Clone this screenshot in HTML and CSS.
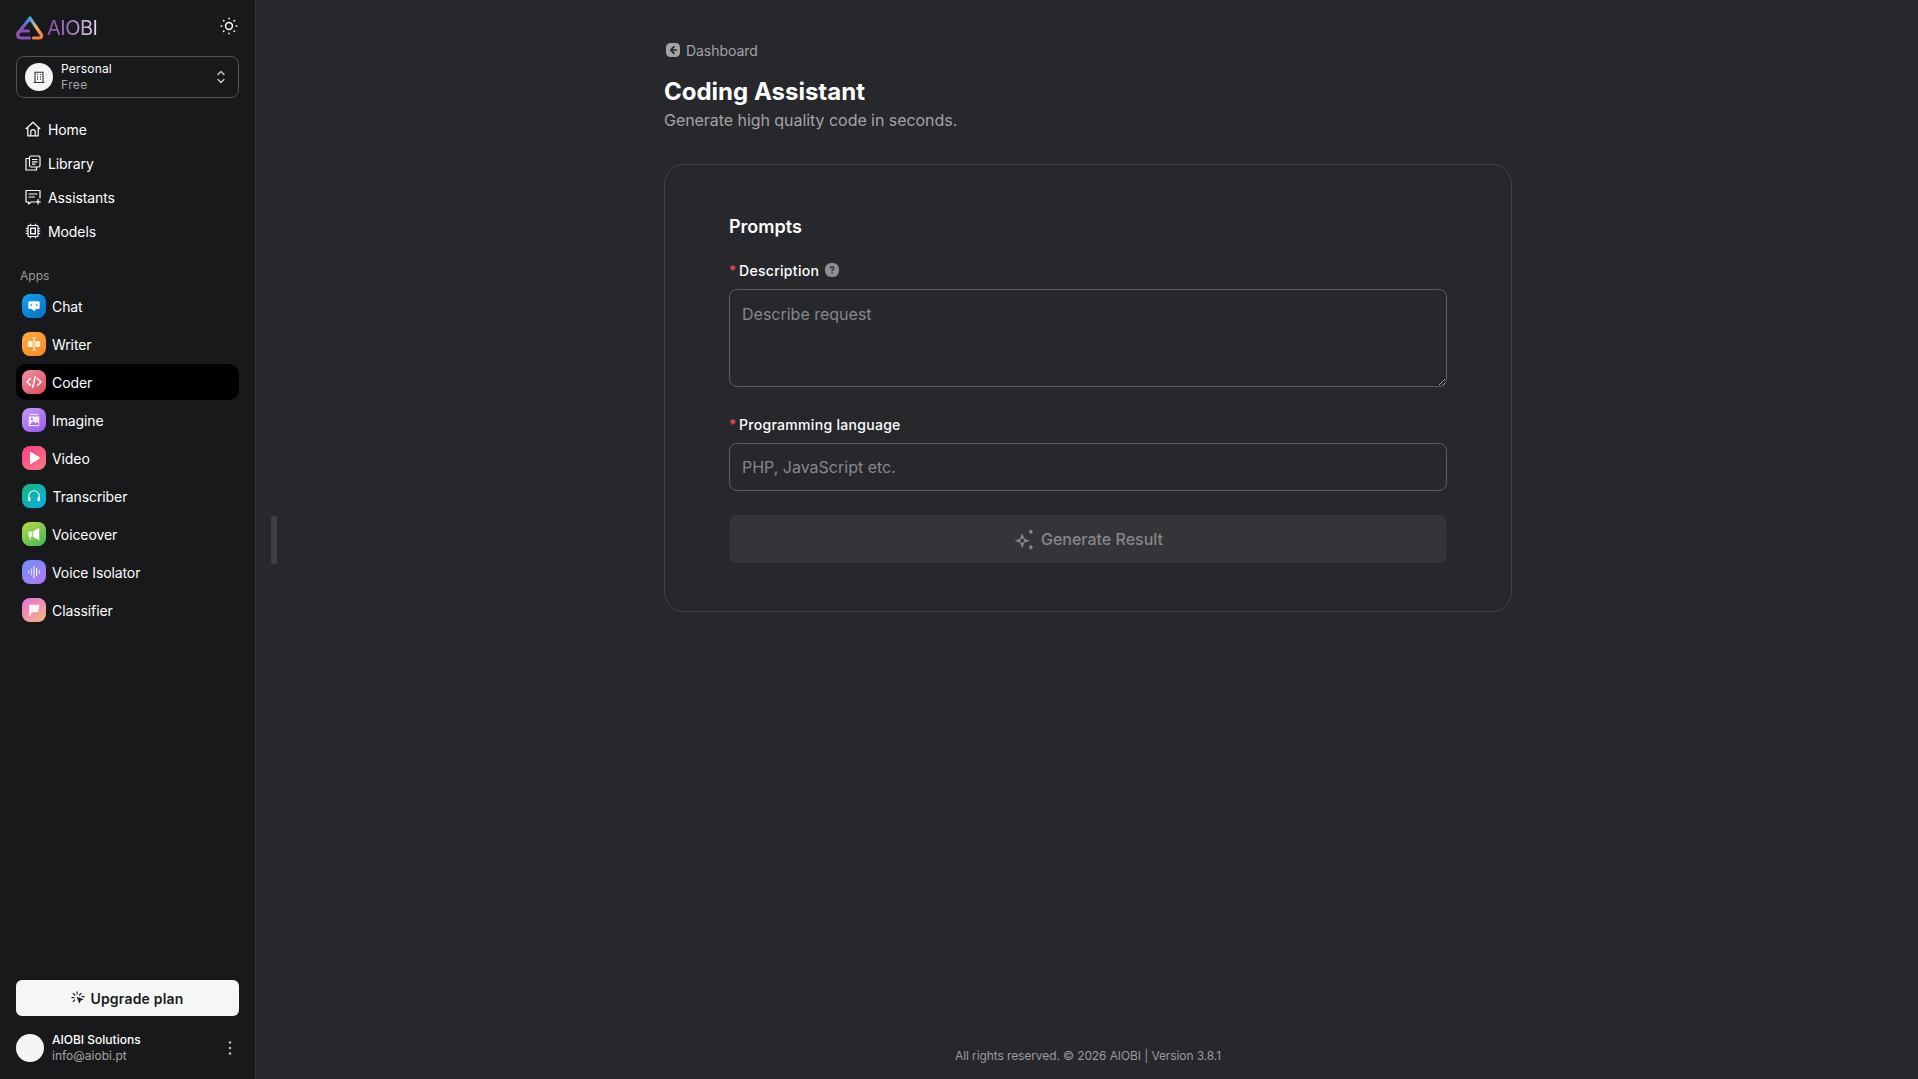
FILE: index.html
```html
<!DOCTYPE html>
<html lang="en">
<head>
<meta charset="utf-8">
<title>Coding Assistant</title>
<link rel="stylesheet" href="styles.css">
</head>
<body>
<svg class="defs" width="0" height="0" aria-hidden="true">
  <defs>
    <linearGradient id="logoA" gradientUnits="userSpaceOnUse" x1="4" y1="14" x2="14" y2="2">
      <stop offset="0" stop-color="#9a4fb8"/><stop offset=".55" stop-color="#5b6fd0"/><stop offset="1" stop-color="#38a8e8"/>
    </linearGradient>
    <linearGradient id="logoB" gradientUnits="userSpaceOnUse" x1="14" y1="2" x2="24" y2="22">
      <stop offset="0" stop-color="#38a8e8"/><stop offset=".5" stop-color="#e8b878"/><stop offset="1" stop-color="#f27a30"/>
    </linearGradient>
  </defs>
</svg>
<aside class="sidebar">
  <div class="brand-row">
    <div class="brand">
      <svg class="logo" viewBox="0 0 28 24" fill="none" stroke-width="3.2" stroke-linecap="round" stroke-linejoin="round">
        <path d="M14 2.2 L4.5 14" stroke="url(#logoA)"/>
        <path d="M14 2.2 L25.5 19 Q26.2 22 23 22 H17.5" stroke="url(#logoB)"/>
        <path d="M12.5 15 H6 Q1.7 15 1.7 18.5 Q1.7 22 5 22 H13.5" stroke="#8f4fb8"/>
      </svg>
      <span class="brand-name">AIOBI</span>
    </div>
    <svg class="sun" viewBox="0 0 18 18" fill="none" stroke="#fff" stroke-width="1.5" stroke-linecap="round">
      <circle cx="9" cy="9" r="3.4"/>
      <path d="M9 1.2v.6M9 16.2v.6M1.2 9h.6M16.2 9h.6M3.5 3.5l.4.4M14.1 14.1l.4.4M3.5 14.5l.4-.4M14.1 3.9l.4-.4"/>
    </svg>
  </div>

  <div class="account">
    <span class="account-avatar">
      <svg viewBox="0 0 14 14" fill="none" stroke="#333" stroke-width="1.1"><path d="M3 12.5V2.2h8v10.3M1.5 12.5h11"/><path d="M5 4.5h1M8 4.5h1M5 6.8h1M8 6.8h1M5 9.1h1M8 9.1h1" stroke-width="1.2"/></svg>
    </span>
    <span class="account-text">
      <span class="account-name">Personal</span>
      <span class="account-plan">Free</span>
    </span>
    <svg class="chevrons" viewBox="0 0 10 16" fill="none" stroke="#c8c8c8" stroke-width="1.4" stroke-linecap="round" stroke-linejoin="round"><path d="M2 5.5L5 2.5L8 5.5M2 10.5L5 13.5L8 10.5"/></svg>
  </div>

  <nav class="nav-main">
    <a class="nav-link">
      <svg viewBox="0 0 16 16" fill="none" stroke="#fff" stroke-width="1.2" stroke-linejoin="round"><path d="M.8 8L8 1.2L15.2 8M2.8 6.3V14.8H13.2V6.3"/><path d="M5.8 14.8V9.8Q8 7.6 10.2 9.8V14.8"/></svg>
      <span>Home</span>
    </a>
    <a class="nav-link">
      <svg viewBox="0 0 16 16" fill="none" stroke="#fff" stroke-width="1.2" stroke-linejoin="round"><rect x="4.5" y="1" width="10.5" height="11" rx="1.5"/><path d="M4.5 3.5H1V15H11.5V12M7 4.5H12.5M7 6.8H12.5M7 9.1H10.5"/></svg>
      <span>Library</span>
    </a>
    <a class="nav-link">
      <svg viewBox="0 0 16 16" fill="none" stroke="#fff" stroke-width="1.2" stroke-linejoin="round" stroke-linecap="round"><path d="M9.5 13H6L3.5 15V13H1V1.5H15V9"/><path d="M4 5H12M4 8H9.5M13 10.5V15M10.8 12.8H15.2"/></svg>
      <span>Assistants</span>
    </a>
    <a class="nav-link">
      <svg viewBox="0 0 16 16" fill="none" stroke="#fff" stroke-width="1.2"><rect x="3" y="2.5" width="10" height="11" rx="1"/><rect x="5.7" y="5.2" width="4.6" height="5.6" stroke-width="1.4"/><path d="M.8 5.5H3M.8 8H3M.8 10.5H3M13 5.5H15.2M13 8H15.2M13 10.5H15.2M5.5.8V2.5M10.5.8V2.5M5.5 13.5V15.2M10.5 13.5V15.2"/></svg>
      <span>Models</span>
    </a>
  </nav>

  <div class="apps-label">Apps</div>

  <nav class="nav-apps">
    <a class="app-link">
      <span class="app-icon i-chat"><svg viewBox="0 0 16 16"><path fill="#fff" d="M3 2.5H13Q14.5 2.5 14.5 4V10Q14.5 11.5 13 11.5H10.5L8 14L5.5 11.5H3Q1.5 11.5 1.5 10V4Q1.5 2.5 3 2.5Z"/><path stroke="#1487d8" stroke-width="1.6" d="M4.8 6V7.6M11.2 6V7.6"/></svg></span>
      <span>Chat</span>
    </a>
    <a class="app-link">
      <span class="app-icon i-writer"><svg viewBox="0 0 16 16"><path fill="#fff" opacity=".85" d="M1.5 4.5H6.5V11.5H1.5Q1 11.5 1 11V5Q1 4.5 1.5 4.5ZM9.5 4.5H14.5Q15 4.5 15 5V11Q15 11.5 14.5 11.5H9.5Z"/><path fill="none" stroke="#ffe9cf" stroke-width="1.4" d="M6 1H10M8 1V15M6 15H10"/></svg></span>
      <span>Writer</span>
    </a>
    <a class="app-link is-active">
      <span class="app-icon i-coder"><svg class="glyph-wide" viewBox="0 0 16 16" fill="none" stroke="#fff" stroke-width="1.5" stroke-linecap="round" stroke-linejoin="round"><path d="M4.5 4.5L1 8L4.5 11.5M11.5 4.5L15 8L11.5 11.5M9.3 2.8L6.7 13.2"/></svg></span>
      <span>Coder</span>
    </a>
    <a class="app-link">
      <span class="app-icon i-imagine"><svg viewBox="0 0 16 16"><path fill="#fff" opacity=".75" d="M3 1H13V2.4H3Z"/><path fill="#fff" d="M2 4H14V15H2Z" opacity=".85"/><circle cx="5.6" cy="7" r="1.2" fill="#a56cf0"/><path fill="#a56cf0" d="M3 13.8L7 9.5L9.5 12L11.5 10L13 11.5V13.8Z"/></svg></span>
      <span>Imagine</span>
    </a>
    <a class="app-link">
      <span class="app-icon i-video"><svg viewBox="0 0 16 16"><path fill="#fff" d="M3.5 1.5Q3.5.6 4.4 1.1L14.4 7.2Q15.2 8 14.4 8.8L4.4 14.9Q3.5 15.4 3.5 14.5Z"/></svg></span>
      <span>Video</span>
    </a>
    <a class="app-link">
      <span class="app-icon i-transcriber"><svg viewBox="0 0 16 16" fill="none" stroke="#fff" stroke-width="1.2"><path d="M2 10V8A6 6 0 0 1 14 8V10"/><rect x="1.2" y="9" width="2.8" height="5" rx="1.2" fill="#fff" stroke="none"/><rect x="12" y="9" width="2.8" height="5" rx="1.2" fill="#fff" stroke="none"/></svg></span>
      <span class="t-transcriber">Transcriber</span>
    </a>
    <a class="app-link">
      <span class="app-icon i-voiceover"><svg viewBox="0 0 16 16"><path fill="#fff" d="M14 1V15L7 11.5V4.5Z"/><path fill="#fff" opacity=".8" d="M1.5 5H6V11H4.5V14.5H3V11H1.5Z"/></svg></span>
      <span>Voiceover</span>
    </a>
    <a class="app-link">
      <span class="app-icon i-isolator"><svg viewBox="0 0 16 16" fill="none" stroke="#fff" stroke-width="1.2" stroke-linecap="round"><path d="M2 6.5V9.5M5 4.5V11.5" opacity=".75"/><path d="M8 1.5V14.5M11 4V12M14 6.5V9.5"/></svg></span>
      <span>Voice Isolator</span>
    </a>
    <a class="app-link">
      <span class="app-icon i-classifier"><svg viewBox="0 0 16 16"><path fill="#fff" opacity=".9" d="M2.5 3.5Q2.5 2 4 2H14.5L12.5 10.5H5L3.5 15H2.5Z"/></svg></span>
      <span>Classifier</span>
    </a>
  </nav>

  <div class="sidebar-bottom">
    <button class="upgrade" type="button">
      <svg viewBox="0 0 16 16" fill="none" stroke="#222" stroke-width="1.3" stroke-linecap="round"><path d="M7 1V3.5M2.5 2.8L4.3 4.6M1 7.5H3.5M2.5 12L4.3 10.2M11.5 2.8L9.7 4.6M12.5 6.5H15"/><path fill="#222" stroke="none" d="M6.5 6.5L14.5 9.5L11 11L9.5 14.5Z"/></svg>
      <span>Upgrade plan</span>
    </button>
    <div class="user">
      <span class="user-avatar"></span>
      <span class="user-text">
        <span class="user-name">AIOBI Solutions</span>
        <span class="user-mail">info@aiobi.pt</span>
      </span>
      <svg class="dots" viewBox="0 0 4 16" fill="#c8c8c8"><circle cx="2" cy="2.5" r="1.2"/><circle cx="2" cy="8" r="1.2"/><circle cx="2" cy="13.5" r="1.2"/></svg>
    </div>
  </div>
</aside>

<div class="resize-handle"></div>

<main class="main">
  <div class="content">
    <a class="crumb">
      <svg viewBox="0 0 14 14"><rect width="14" height="14" rx="4.5" fill="#a3a4a7"/><path d="M8 3.6L4.8 7L8 10.4M5 7H10.5" fill="none" stroke="#27282c" stroke-width="1.7" stroke-linecap="round" stroke-linejoin="round"/></svg>
      <span>Dashboard</span>
    </a>
    <h1 class="title">Coding Assistant</h1>
    <p class="subtitle">Generate high quality code in seconds.</p>

    <form class="card">
      <h2 class="card-title">Prompts</h2>
      <div class="field field-desc">
        <div class="field-label">
          <span class="req">*</span>
          <span>Description</span>
          <svg class="help" viewBox="0 0 14 14"><rect width="14" height="14" rx="6" fill="#8e8f92"/><path d="M5.2 5.4Q5.4 3.7 7.1 3.7Q8.9 3.8 8.9 5.3Q8.9 6.3 7.1 7.2V8.2M7.1 9.6V10.7" fill="none" stroke="#27282c" stroke-width="1.3"/></svg>
        </div>
        <textarea class="control area" placeholder="Describe request"></textarea>
      </div>
      <div class="field field-lang">
        <div class="field-label">
          <span class="req">*</span>
          <span>Programming language</span>
        </div>
        <input class="control line" type="text" placeholder="PHP, JavaScript etc.">
      </div>
      <button class="generate" type="button">
        <svg viewBox="0 0 20 20" fill="#86878a"><path fill-rule="evenodd" d="M8 4.5L9.8 9.2L14.5 11L9.8 12.8L8 17.5L6.2 12.8L1.5 11L6.2 9.2ZM8 9.2A1.8 1.8 0 1 0 8 12.8A1.8 1.8 0 1 0 8 9.2Z"/><path d="M15.5 1L17.4 3.2L15.5 5.4L13.6 3.2ZM15.5 14.6L17.4 16.8L15.5 19L13.6 16.8Z"/></svg>
        <span>Generate Result</span>
      </button>
    </form>
  </div>
  <footer class="footer">All rights reserved. © 2026 AIOBI | Version 3.8.1</footer>
</main>
</body>
</html>
```
FILE: styles.css
```css
* { box-sizing: border-box; }
html, body { height: 100%; }
body {
  margin: 0;
  display: flex;
  height: 1079px;
  overflow: hidden;
  background: #27282c;
  color: #fff;
  font-family: Inter, "Liberation Sans", sans-serif;
  position: relative;
}
.defs { position: absolute; }
a { color: inherit; text-decoration: none; }

.sidebar {
  width: 256px;
  flex: none;
  height: 100%;
  background: #18191b;
  border-right: 1px solid #34363a;
  padding: 14px 16px 17px;
  display: flex;
  flex-direction: column;
}
.brand-row { display: flex; align-items: center; justify-content: space-between; height: 24px; padding-right: 1px; }
.brand { display: flex; align-items: center; gap: 3px; padding-top: 3px; }
.logo { width: 28px; height: 24px; }
.brand-name {
  font-size: 20px;
  font-weight: 400;
  letter-spacing: -.5px;
  background: linear-gradient(90deg, #8c4fb0 0%, #a679c8 45%, #e0dce4 100%);
  -webkit-background-clip: text;
  background-clip: text;
  color: transparent;
}
.sun { width: 18px; height: 18px; }

.account {
  margin-top: 18px;
  height: 42px;
  border: 1px solid #515357;
  border-radius: 8px;
  display: flex;
  align-items: center;
  padding: 0 12px 0 8px;
}
.account-avatar {
  width: 28px; height: 28px; border-radius: 50%;
  background: #f5f5f5;
  display: flex; align-items: center; justify-content: center;
  flex: none;
}
.account-avatar svg { width: 14px; height: 14px; }
.account-text { margin-left: 8px; display: flex; flex-direction: column; flex: 1; gap: 0; }
.account-name { font-size: 12px; line-height: 16px; letter-spacing: .2px; }
.account-plan { font-size: 12px; line-height: 16px; color: #a3a4a7; letter-spacing: .4px; }
.chevrons { width: 10px; height: 16px; }

.nav-main { margin-top: 14px; display: flex; flex-direction: column; }
.nav-link {
  height: 34px;
  display: flex;
  align-items: center;
  gap: 8px;
  padding-left: 9px;
  font-size: 14px;
  letter-spacing: -.1px;
}
.nav-link svg { width: 16px; height: 16px; flex: none; margin-right: -1px; }

.apps-label { margin-top: 20px; padding-left: 4px; font-size: 12px; line-height: 16px; color: #9a9b9e; }

.nav-apps { margin-top: 4px; display: flex; flex-direction: column; gap: 2px; }
.app-link {
  height: 36px;
  display: flex;
  align-items: center;
  gap: 6px;
  padding-left: 6px;
  font-size: 14px;
  letter-spacing: -.1px;
  border-radius: 10px;
}
.app-link.is-active { background: #000; }
.app-icon {
  width: 24px; height: 24px; flex: none;
  border-radius: 8px;
  display: flex; align-items: center; justify-content: center;
}
.app-icon svg { width: 14px; height: 14px; }
.app-icon .glyph-wide { width: 16px; height: 16px; }
.i-chat { background: linear-gradient(145deg, #12a0ee, #0a6fc4); }
.i-writer { background: linear-gradient(145deg, #ffab40, #f78a1f); }
.i-coder { background: linear-gradient(145deg, #f08fa8, #dc4d55); }
.i-imagine { background: linear-gradient(145deg, #c79af5, #9a58ef); }
.i-video { background: linear-gradient(145deg, #f93d8c, #fa7a80); }
.i-transcriber { background: linear-gradient(145deg, #17b77c, #04afe6); }
.i-voiceover { background: linear-gradient(145deg, #bada3c, #3fb95a); }
.i-isolator { background: linear-gradient(145deg, #6d90fb, #b278f5); }
.i-classifier { background: linear-gradient(145deg, #e86fe0, #f5b878); }
.t-transcriber { margin-left: .5px; }

.sidebar-bottom { margin-top: auto; display: flex; flex-direction: column; gap: 18px; }
.upgrade {
  height: 36px;
  width: 100%;
  border: 0;
  border-radius: 6px;
  background: #f5f7f7;
  color: #1b1c1e;
  font: 600 14px Inter, "Liberation Sans", sans-serif;
  letter-spacing: .2px;
  display: flex;
  align-items: center;
  justify-content: center;
  gap: 5px;
}
.upgrade svg { width: 14px; height: 14px; }
.user { display: flex; align-items: center; height: 28px; padding-right: 7px; }
.user-avatar { width: 28px; height: 28px; border-radius: 50%; background: #f5f5f5; flex: none; }
.user-text { margin-left: 8px; flex: 1; display: flex; flex-direction: column; }
.user-name { font-size: 12px; line-height: 16px; font-weight: 500; }
.user-mail { font-size: 12px; line-height: 16px; color: #a3a4a7; }
.dots { width: 4px; height: 16px; }

.resize-handle {
  position: absolute;
  left: 271px; top: 516px;
  width: 6px; height: 48px;
  border-radius: 4px;
  background: #3c3f44;
}

.main {
  flex: 1;
  min-width: 0;
  height: 100%;
  display: flex;
  flex-direction: column;
  align-items: center;
  padding: 0 0 0 2px;
}
.content { width: 848px; padding-top: 41px; flex: 1; }

.crumb { display: flex; align-items: center; gap: 6px; height: 18px; padding-left: 2px; font-size: 14px; letter-spacing: -.05px; color: #a3a4a7; }
.crumb svg { width: 14px; height: 14px; }
.title { margin: 17px 0 0; font-size: 24px; line-height: 32px; font-weight: 700; color: #fff; }
.subtitle { margin: 0; font-size: 16px; line-height: 24px; letter-spacing: -.05px; color: #a3a4a7; }

.card {
  margin-top: 32px;
  height: 448px;
  border: 1px solid #404246;
  border-radius: 20px;
  padding: 48px 64px 0;
  display: flex;
  flex-direction: column;
}
.card-title { margin: 0; font-size: 18px; line-height: 28px; font-weight: 600; }
.field-label { display: flex; align-items: center; gap: 4px; height: 20px; font-size: 14px; font-weight: 500; letter-spacing: .3px; color: #fff; }
.req { color: #f04b54; width: 6px; }
.help { width: 14px; height: 14px; margin-left: 2px; }
.field-desc { margin-top: 19px; }
.field-lang { margin-top: 27px; }
.control {
  display: block;
  width: 100%;
  margin-top: 9px;
  background: transparent;
  border: 1px solid #5a5c60;
  border-radius: 8px;
  color: #fff;
  font: 400 16px/24px Inter, "Liberation Sans", sans-serif;
  padding: 0 12px;
  outline: 0;
}
.control::placeholder { color: #86878a; opacity: 1; }
.area { height: 98px; padding-top: 12px; }
.line { height: 48px; }
.generate {
  margin-top: 24px;
  height: 48px;
  width: 100%;
  border: 0;
  border-radius: 8px;
  background: #343539;
  color: #86878a;
  font: 500 16px Inter, "Liberation Sans", sans-serif;
  display: flex;
  align-items: center;
  justify-content: center;
  gap: 5px;
}
.generate svg { width: 23px; height: 23px; }

.footer { height: 48px; font-size: 12px; line-height: 16px; letter-spacing: -.1px; color: #9a9b9e; padding-top: 17px; }
```
